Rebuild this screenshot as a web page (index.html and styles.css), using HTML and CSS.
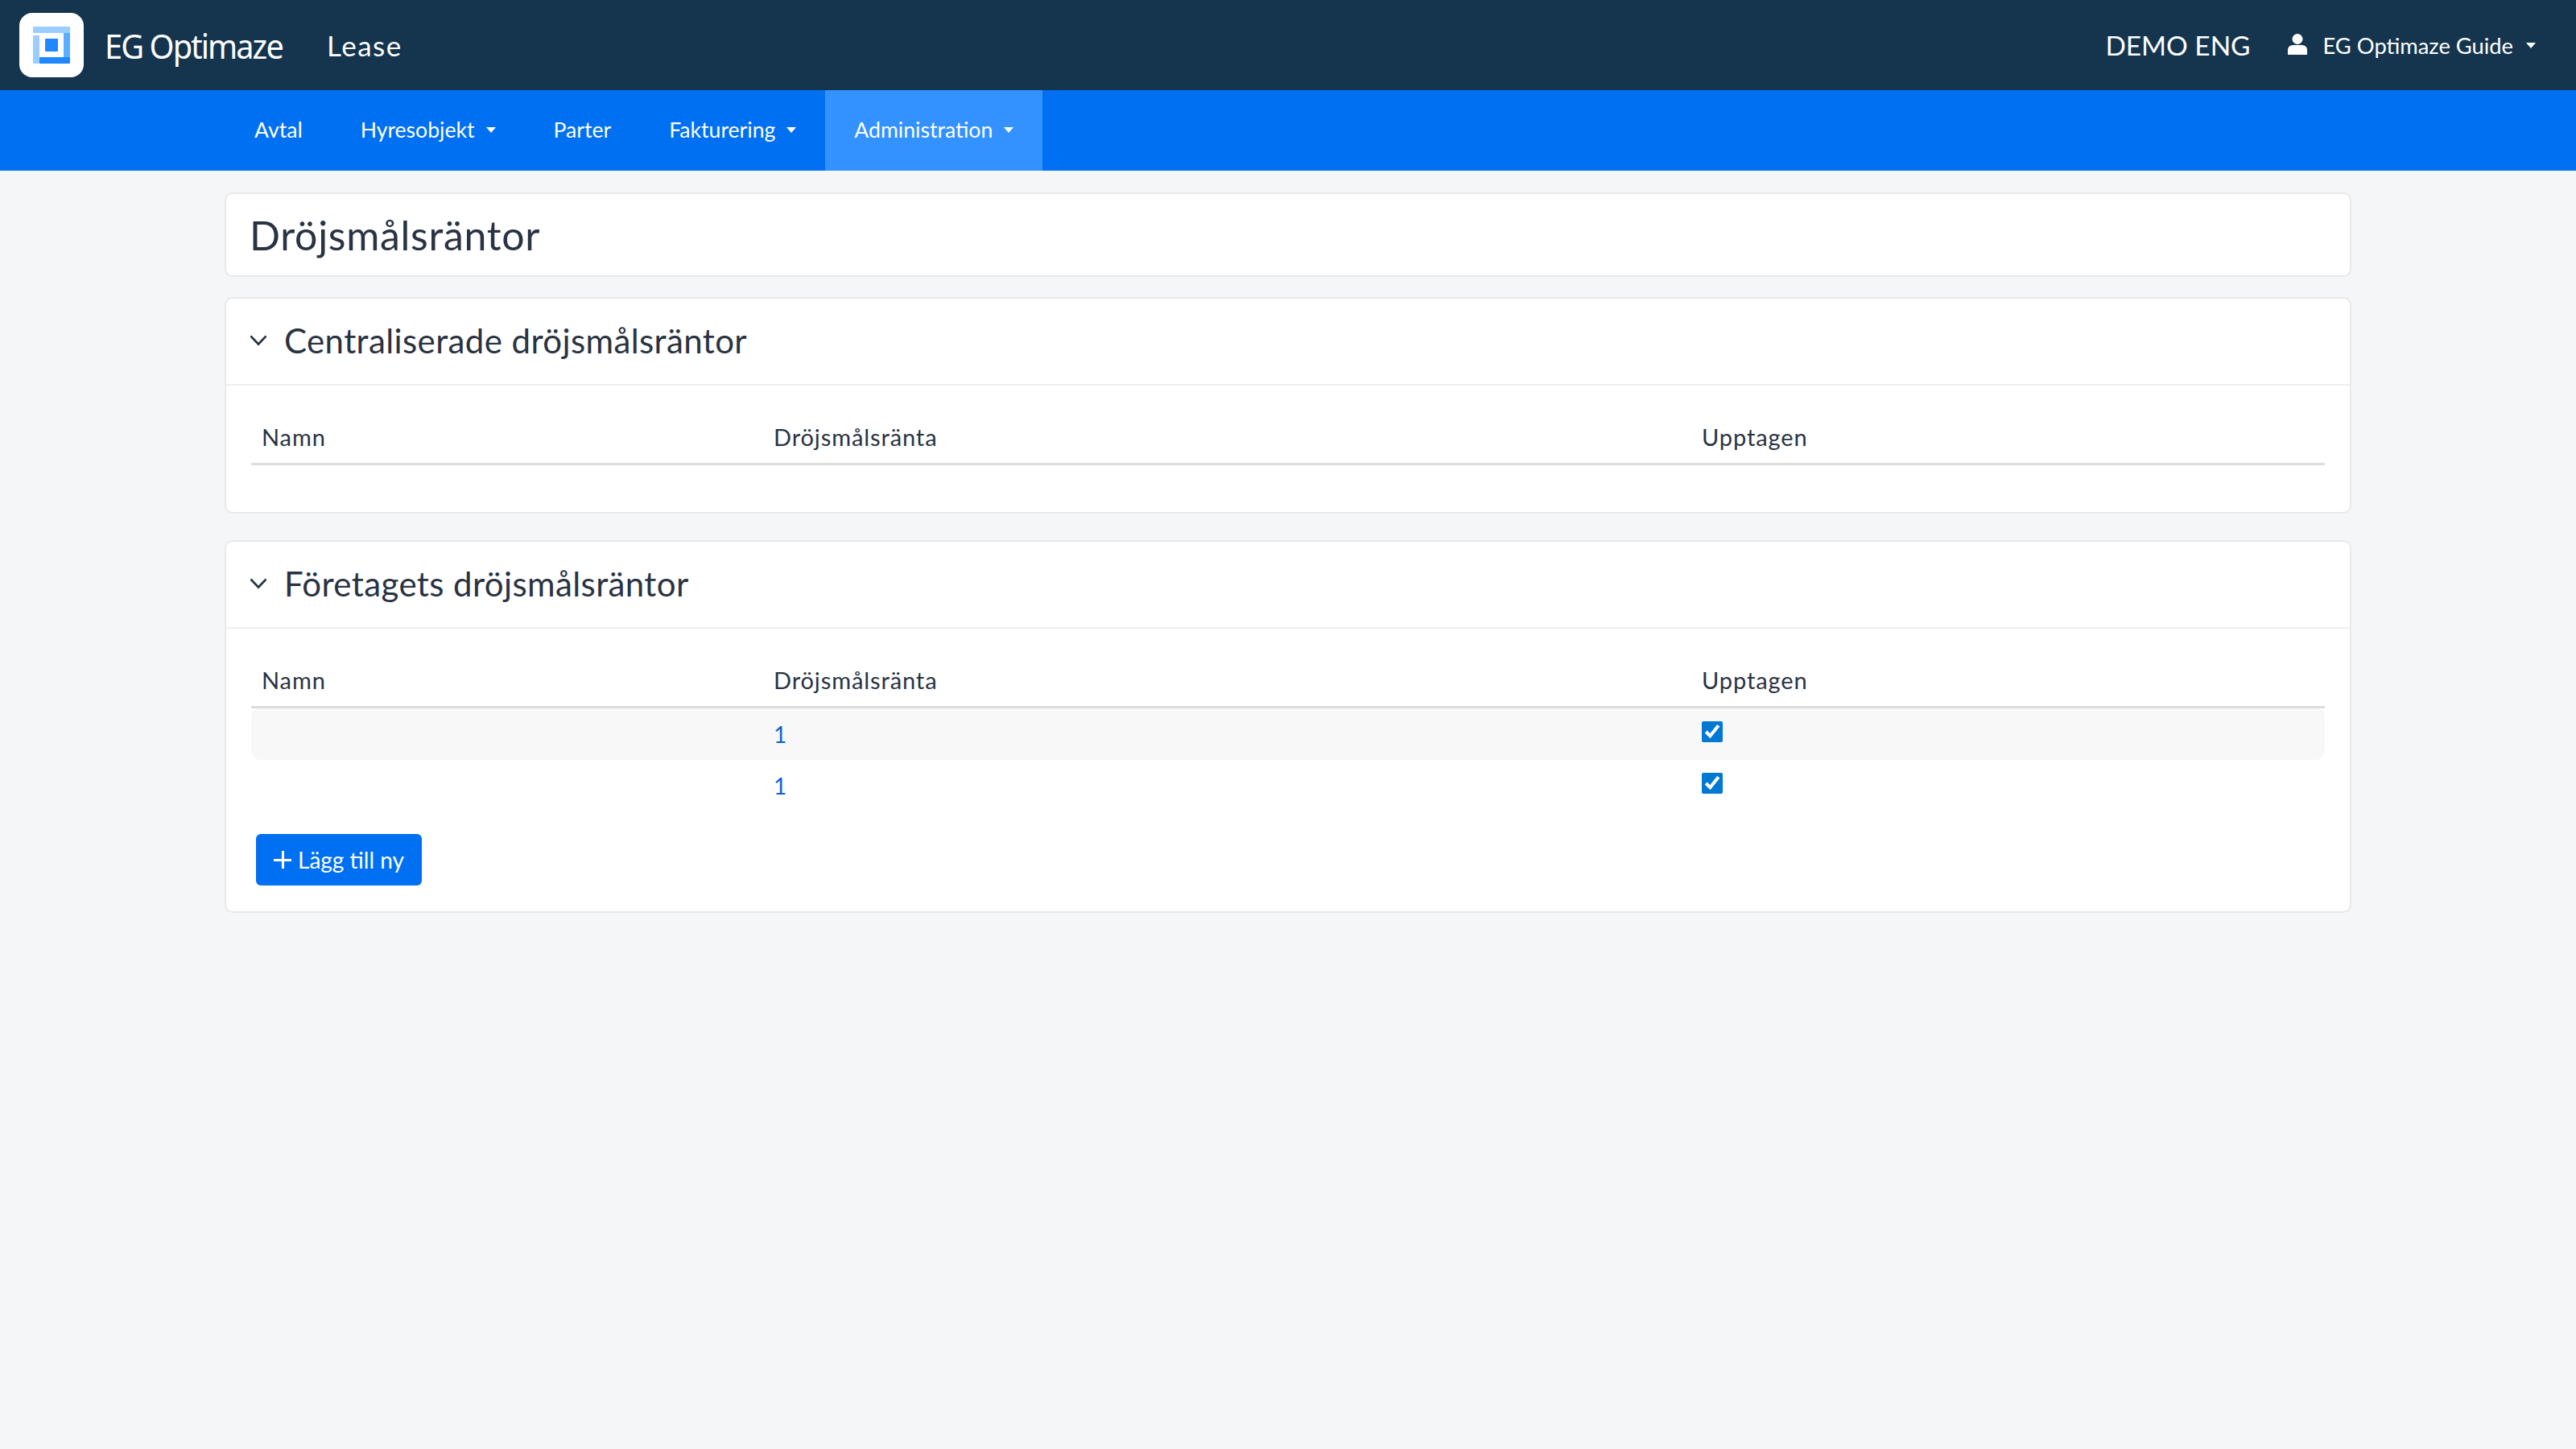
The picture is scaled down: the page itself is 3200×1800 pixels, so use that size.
FILE: index.html
```html
<!DOCTYPE html>
<html lang="sv">
<head>
  <meta charset="UTF-8">
  <title>Dröjsmålsräntor</title>
  <link rel="stylesheet" href="styles.css">
</head>
<body>

  <header class="top-bar">
    <div class="logo-box">
      <svg class="logo-mark" viewBox="0 0 80 80" width="80" height="80">
        <rect x="17" y="17" width="46" height="8" rx="1" fill="#99ceff"/>
        <rect x="55" y="25" width="8" height="31" fill="#5aaeff"/>
        <rect x="25" y="55" width="38" height="8" rx="1" fill="#1f87ff"/>
        <rect x="17" y="28" width="8" height="35" rx="1" fill="#99ceff"/>
        <rect x="32" y="32" width="16" height="16" rx="1" fill="#1f87ff"/>
      </svg>
    </div>
    <span class="brand">EG Optimaze</span>
    <span class="product">Lease</span>
    <span class="company">DEMO ENG</span>
    <div class="user-menu">
      <svg class="user-icon" viewBox="0 0 24 26" width="24" height="26">
        <ellipse cx="12" cy="6.500" rx="6.500" ry="6.500" fill="#fff"/>
        <path d="M0 26v-6c0-4 3.500-6 6.500-6h11c3 0 6.500 2 6.500 6v6z" fill="#fff"/>
      </svg>
      <span>EG Optimaze Guide</span>
      <i class="caret"></i>
    </div>
  </header>

  <nav class="main-nav">
    <a class="nav-item" href="#">Avtal</a>
    <a class="nav-item" href="#">Hyresobjekt<i class="caret"></i></a>
    <a class="nav-item" href="#">Parter</a>
    <a class="nav-item" href="#">Fakturering<i class="caret"></i></a>
    <a class="nav-item active" href="#">Administration<i class="caret"></i></a>
  </nav>

  <main class="page">
    <div class="card title-card">
      <h1>Dröjsmålsräntor</h1>
    </div>

    <section class="card central-card">
      <div class="card-head">
        <svg class="chevron" viewBox="0 0 22 14" width="22" height="14">
          <path d="M1.500 1.500 11 11.500l9.500-10" fill="none" stroke="#2a3342" stroke-width="2.600"/>
        </svg>
        <h2>Centraliserade dröjsmålsräntor</h2>
      </div>
      <div class="card-body empty-body">
        <table class="rate-table">
          <thead>
            <tr><th class="col-name">Namn</th><th class="col-rate">Dröjsmålsränta</th><th>Upptagen</th></tr>
          </thead>
        </table>
      </div>
    </section>

    <section class="card">
      <div class="card-head">
        <svg class="chevron" viewBox="0 0 22 14" width="22" height="14">
          <path d="M1.500 1.500 11 11.500l9.500-10" fill="none" stroke="#2a3342" stroke-width="2.600"/>
        </svg>
        <h2>Företagets dröjsmålsräntor</h2>
      </div>
      <div class="card-body">
        <table class="rate-table">
          <thead>
            <tr><th class="col-name">Namn</th><th class="col-rate">Dröjsmålsränta</th><th>Upptagen</th></tr>
          </thead>
          <tbody>
            <tr>
              <td></td>
              <td><a href="#">1</a></td>
              <td><input class="check" type="checkbox" checked></td>
            </tr>
            <tr>
              <td></td>
              <td><a href="#">1</a></td>
              <td><input class="check" type="checkbox" checked></td>
            </tr>
          </tbody>
        </table>
        <button class="add-btn" type="button"><span class="plus"></span>Lägg till ny</button>
      </div>
    </section>
  </main>

</body>
</html>
```

FILE: styles.css
```css
body {
  margin: 0;
  font-family: Lato, "Open Sans", sans-serif;
  font-size: 28px;
  color: #2a3342;
  background-color: #f5f6f8;
  min-height: 1800px;
}

.top-bar {
  display: flex;
  align-items: center;
  height: 112px;
  padding: 0 50px 0 24px;
  box-sizing: border-box;
  background-color: #15354f;
  color: white;
}

.logo-box {
  width: 80px;
  height: 80px;
  border-radius: 16px;
  background-color: white;
}

.logo-mark {
  display: block;
}

.brand {
  margin-left: 26px;
  font-family: "Noto Sans", sans-serif;
  font-size: 42px;
  letter-spacing: -2px;
  transform: scaleX(0.945);
  transform-origin: left;
  width: 220px;
  white-space: nowrap;
}

.product {
  margin-left: 56px;
  font-size: 35px;
  letter-spacing: 1.500px;
}

.company {
  margin-left: auto;
  font-size: 33.400px;
}

.user-menu {
  display: flex;
  align-items: center;
  margin-left: 46px;
  font-size: 27.300px;
}

.user-icon {
  margin-right: 20px;
  margin-bottom: 2px;
}

.caret {
  display: inline-block;
  margin-left: 14px;
  border-top: 7px solid white;
  border-left: 6px solid transparent;
  border-right: 6px solid transparent;
}

.user-menu .caret {
  margin-left: 16px;
}

.main-nav {
  display: flex;
  height: 100px;
  padding-left: 280px;
  background-color: #0070f2;
  font-size: 26.600px;
}

.nav-item {
  display: flex;
  align-items: center;
  padding: 0 36px 2px;
  color: white;
  text-decoration: none;
}

.nav-item.active {
  background-color: #3392ff;
}

.page {
  display: flex;
  flex-direction: column;
  width: 2642px;
  margin: 27px auto 0 279px;
}

.card {
  margin-bottom: 25px;
  background-color: white;
  border: 2px solid #e8e9eb;
  border-radius: 10px;
}

.central-card {
  margin-bottom: 33px;
}

.title-card {
  height: 105px;
  box-sizing: border-box;
  display: flex;
  align-items: center;
  padding-left: 29px;
}

h1 {
  margin: 0;
  font-size: 50px;
  font-weight: 400;
  letter-spacing: 0.700px;
}

.card-head {
  display: flex;
  align-items: center;
  height: 108px;
  padding: 0 0 3px 29px;
  box-sizing: border-box;
  border-bottom: 2px solid #eeeff1;
}

.chevron {
  margin-right: 21px;
}

h2 {
  margin: 0;
  font-size: 42px;
  font-weight: 400;
  letter-spacing: 0.400px;
}

.card-body {
  padding: 30px 31px 32px;
}

.empty-body {
  padding-bottom: 58px;
}

.rate-table {
  width: 100%;
  border-collapse: collapse;
  table-layout: fixed;
}

.rate-table th {
  height: 66px;
  padding: 0 13px;
  text-align: left;
  font-size: 29px;
  font-weight: 400;
  letter-spacing: 0.900px;
  border-bottom: 3px solid #dcdcdd;
}

.col-name {
  width: 610px;
}

.col-rate {
  width: 1127px;
}

.rate-table td {
  height: 64px;
  padding: 0 13px;
}

.rate-table tbody tr:nth-child(odd) td {
  background-color: #f8f8f8;
}

.rate-table tbody tr:nth-child(odd) td:first-child {
  border-radius: 12px 0 0 12px;
}

.rate-table tbody tr:nth-child(odd) td:last-child {
  border-radius: 0 12px 12px 0;
}

.rate-table a {
  color: #0b63ce;
  text-decoration: none;
}

.check {
  display: block;
  width: 26px;
  height: 26px;
  margin: 0 0 6px;
  accent-color: #0078d4;
}

.add-btn {
  display: flex;
  align-items: center;
  height: 64px;
  margin: 28px 0 0 6px;
  padding: 0 22px;
  border: 0;
  border-radius: 6px;
  background-color: #0070f2;
  color: white;
  font-family: inherit;
  font-size: 28px;
}

.plus {
  width: 22px;
  height: 22px;
  margin-right: 8px;
  background:
    linear-gradient(white, white) center / 100% 3px no-repeat,
    linear-gradient(white, white) center / 3px 100% no-repeat;
}
```
